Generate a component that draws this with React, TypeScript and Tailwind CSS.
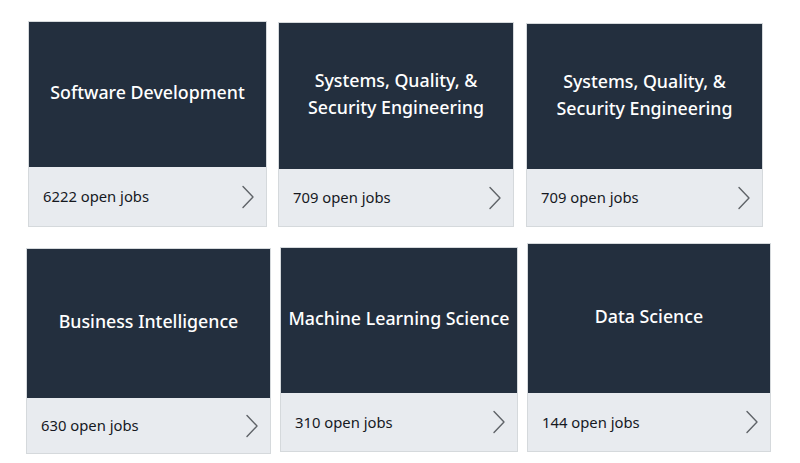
const font = { fontFamily: '"Noto Sans", "Open Sans", sans-serif' }

interface JobCardProps {
  title: string[]
  count: number
  className: string
  darkH: string
}

const Chevron = () => (
  <svg width="14" height="24" viewBox="0 0 14 24" fill="none" className="shrink-0">
    <path d="M2 1.5 L12 12 L2 22.5" stroke="#5f6368" strokeWidth="1.4" strokeLinecap="round" strokeLinejoin="round" />
  </svg>
)

const JobCard = ({ title, count, className, darkH }: JobCardProps) => (
  <div className={`flex flex-col border border-[#d5d9dc] bg-[#e8ebef] ${className}`}>
    <div className={`flex flex-col items-center justify-center pb-[4px] bg-[#232f3e] text-white text-[17.8px] leading-[27px] font-medium ${darkH}`}>
      {title.map((line, i) => (
        <span key={i}>{line}</span>
      ))}
    </div>
    <div className="flex flex-1 items-center justify-between pl-[14px] pr-[11px] text-[#16191f] text-[14.8px]">
      <span>{count} open jobs</span>
      <Chevron />
    </div>
  </div>
)

export default function App() {
  return (
    <div className="w-[800px] h-[463px] bg-white" style={font}>
      <div className="flex items-start pt-[21px] pl-[28px]">
        <JobCard title={["Software Development"]} count={6222} className="w-[239px] h-[206px]" darkH="h-[145px]" />
        <JobCard title={["Systems, Quality, &", "Security Engineering"]} count={709} className="w-[236px] h-[205px] ml-[11px] mt-px" darkH="h-[146px]" />
        <JobCard title={["Systems, Quality, &", "Security Engineering"]} count={709} className="w-[237px] h-[204px] ml-[12px] mt-[2px]" darkH="h-[145px]" />
      </div>
      <div className="flex items-start pl-[26px] mt-[16px]">
        <JobCard title={["Business Intelligence"]} count={630} className="w-[245px] h-[206px] mt-[5px]" darkH="h-[149px]" />
        <JobCard title={["Machine Learning Science"]} count={310} className="w-[238px] h-[205px] ml-[9px] mt-[4px]" darkH="h-[145px]" />
        <JobCard title={["Data Science"]} count={144} className="w-[244px] h-[209px] ml-[9px]" darkH="h-[149px]" />
      </div>
    </div>
  )
}
